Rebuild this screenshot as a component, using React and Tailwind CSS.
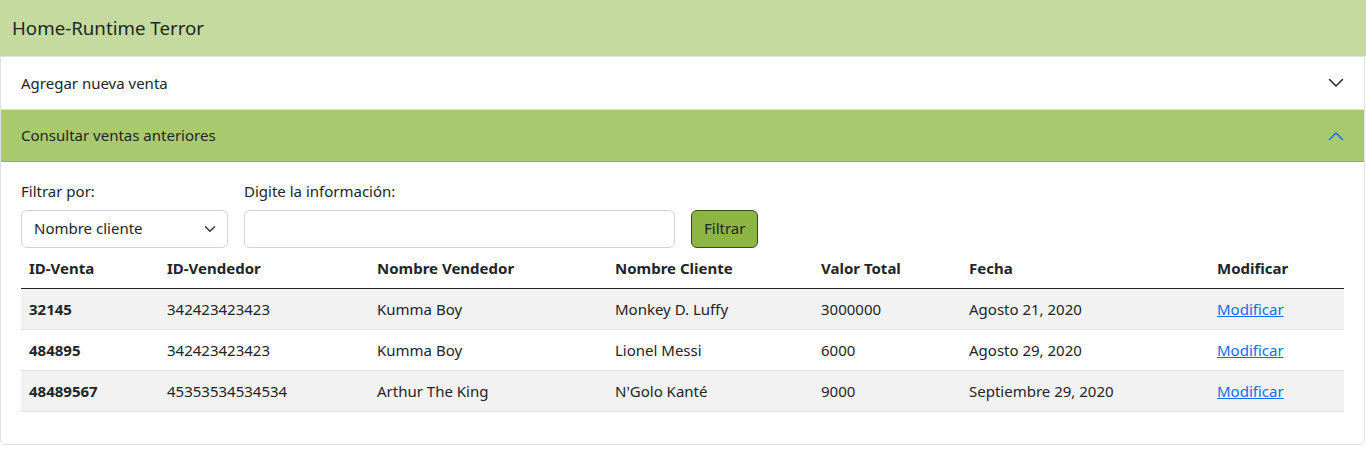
import React, { useState } from 'react';

const ventas = [
  { id: '32145', vendedorId: '342423423423', vendedor: 'Kumma Boy', cliente: 'Monkey D. Luffy', valor: '3000000', fecha: 'Agosto 21, 2020' },
  { id: '484895', vendedorId: '342423423423', vendedor: 'Kumma Boy', cliente: 'Lionel Messi', valor: '6000', fecha: 'Agosto 29, 2020' },
  { id: '48489567', vendedorId: '45353534534534', vendedor: 'Arthur The King', cliente: "N'Golo Kanté", valor: '9000', fecha: 'Septiembre 29, 2020' }
];

const columns = [
  { label: 'ID-Venta', width: 'w-[138px]' },
  { label: 'ID-Vendedor', width: 'w-[210px]' },
  { label: 'Nombre Vendedor', width: 'w-[238px]' },
  { label: 'Nombre Cliente', width: 'w-[206px]' },
  { label: 'Valor Total', width: 'w-[148px]' },
  { label: 'Fecha', width: 'w-[248px]' },
  { label: 'Modificar', width: '' }
];

function Chevron({ up, className }) {
  return (
    <svg width="16" height="16" viewBox="0 0 16 16" fill="none" className={className}>
      <path
        d={up ? 'M1.5 11.5 8 5l6.5 6.5' : 'M1.5 4.5 8 11l6.5-6.5'}
        stroke="currentColor"
        strokeWidth="1.5"
        strokeLinecap="round"
        strokeLinejoin="round"
      />
    </svg>
  );
}

export default function App() {
  const [filtro, setFiltro] = useState('cliente');
  const [texto, setTexto] = useState('');

  return (
    <div className="min-h-[451px] bg-white text-[#212529]" style={{ fontFamily: '"Noto Sans", sans-serif' }}>
      <header className="flex h-14 items-center bg-[#c5da9f] px-3 text-[18.7px]">Home-Runtime Terror</header>

      <div className="mr-px rounded-b-md border border-[#dee2e6]">
        <button type="button" className="flex h-[53px] w-full items-center justify-between border-b border-[#dee2e6] px-5 text-left text-[15px]">
          Agregar nueva venta
          <Chevron className="text-[#212529]" />
        </button>
        <button type="button" className="flex h-[52px] w-full items-center justify-between border-b border-[#93b25a] bg-[#a9c96e] px-5 text-left text-[15px]">
          Consultar ventas anteriores
          <Chevron up className="text-[#0d6efd]" />
        </button>

        <div className="px-5 pb-8 pt-[18px]">
          <div className="flex items-end gap-4 text-[15px]">
            <div className="w-[207px]">
              <label className="mb-[7px] block">Filtrar por:</label>
              <div className="relative">
                <select
                  value={filtro}
                  onChange={(e) => setFiltro(e.target.value)}
                  className="h-[38px] w-full appearance-none rounded-md border border-[#ced4da] bg-white px-3 text-[15px] outline-none"
                >
                  <option value="cliente">Nombre cliente</option>
                  <option value="vendedor">Nombre vendedor</option>
                  <option value="id">ID-Venta</option>
                </select>
                <svg width="12" height="12" viewBox="0 0 16 16" fill="none" className="pointer-events-none absolute right-3 top-[13px]">
                  <path d="m2 5 6 6 6-6" stroke="#343a40" strokeWidth="2" strokeLinecap="round" strokeLinejoin="round" />
                </svg>
              </div>
            </div>
            <div className="w-[431px]">
              <label className="mb-[7px] block">Digite la información:</label>
              <input
                type="text"
                value={texto}
                onChange={(e) => setTexto(e.target.value)}
                className="h-[38px] w-full rounded-md border border-[#ced4da] px-3 outline-none"
              />
            </div>
            <button type="button" className="h-[38px] rounded-md border border-[#3b4a1e] bg-[#8db543] px-3 text-[15px]">
              Filtrar
            </button>
          </div>

          <table className="w-full border-collapse text-left text-[15px]">
            <thead>
              <tr className="border-b border-[#212529]">
                {columns.map((col) => (
                  <th key={col.label} className={`${col.width} h-[41px] px-2 font-bold`}>{col.label}</th>
                ))}
              </tr>
            </thead>
            <tbody>
              {ventas.map((v, i) => (
                <tr key={v.id} className={`border-b border-[#dee2e6] ${i % 2 === 0 ? 'bg-[#f2f2f2]' : ''}`}>
                  <td className="h-[41px] px-2 font-bold">{v.id}</td>
                  <td className="px-2">{v.vendedorId}</td>
                  <td className="px-2">{v.vendedor}</td>
                  <td className="px-2">{v.cliente}</td>
                  <td className="px-2">{v.valor}</td>
                  <td className="px-2">{v.fecha}</td>
                  <td className="px-2">
                    <a href="#" className="text-[#0d6efd] underline">Modificar</a>
                  </td>
                </tr>
              ))}
            </tbody>
          </table>
        </div>
      </div>
    </div>
  );
}
